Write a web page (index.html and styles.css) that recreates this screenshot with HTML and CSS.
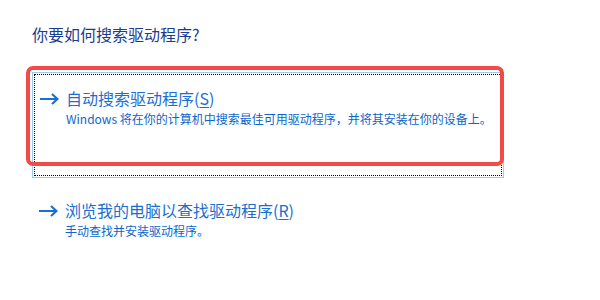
FILE: index.html
```html
<!DOCTYPE html>
<html lang="zh-CN">
<head>
    <meta charset="UTF-8">
    <title>更新驱动程序</title>
    <link rel="stylesheet" href="styles.css">
</head>
<body>

    <!-- Frage oben -->
    <h1 class="question">你要如何搜索驱动程序?</h1>

    <!-- Auswahl: automatisch -->
    <div class="option option-selected">
        <div class="focus">
            <svg class="arrow" width="20" height="12" viewBox="0 0 20 12">
                <path d="M1 6 H18 M13 1 L18.5 6 L13 11" fill="none" stroke="#1a6fd2" stroke-width="2.2"/>
            </svg>
            <div class="option-text">
                <div class="option-title">自动搜索驱动程序(<u>S</u>)</div>
                <div class="option-desc">Windows 将在你的计算机中搜索最佳可用驱动程序，并将其安装在你的设备上。</div>
            </div>
        </div>
        <!-- rote Markierung -->
        <div class="mark"></div>
    </div>

    <!-- Auswahl: manuell -->
    <div class="option">
        <div class="focus">
            <svg class="arrow" width="20" height="12" viewBox="0 0 20 12">
                <path d="M1 6 H18 M13 1 L18.5 6 L13 11" fill="none" stroke="#1a6fd2" stroke-width="2.2"/>
            </svg>
            <div class="option-text">
                <div class="option-title">浏览我的电脑以查找驱动程序(<u>R</u>)</div>
                <div class="option-desc">手动查找并安装驱动程序。</div>
            </div>
        </div>
    </div>

</body>
</html>
```

FILE: styles.css
```css
body {
    margin: 0;
    padding: 23px 0 0 32px;
    background-color: white;
    font-family: "Noto Sans CJK SC", "Noto Sans", sans-serif;
}

/* Frage */
.question {
    margin: 0 0 27px 0;
    font-size: 16px;
    font-weight: normal;
    line-height: 22px;
    color: #1b3c8f;
}

/* Optionen */
.option {
    position: relative;
    width: 472px;
    height: 106px;
    box-sizing: border-box;
    border: 1px solid transparent;
    margin-bottom: 7px;
}

.option-selected {
    border-color: #9ccaf0;
}

.focus {
    display: flex;
    align-items: flex-start;
    height: 100%;
    box-sizing: border-box;
    padding: 13px 0 0 5px;
}

.option-selected .focus {
    margin: 1px;
    height: calc(100% - 2px);
    padding: 12px 0 0 4px;
    border: 1px dotted #000;
}

.arrow {
    margin-top: 6px;
    margin-right: 7px;
    flex-shrink: 0;
}

.option-title {
    font-size: 16px;
    line-height: 23px;
    color: #1a6fd2;
}

.option-title u {
    text-underline-offset: 2px;
}

.option-desc {
    font-size: 12px;
    line-height: 18px;
    color: #0b66cc;
}

/* rote Markierung */
.mark {
    position: absolute;
    left: -7px;
    top: -7px;
    width: 478px;
    height: 100px;
    box-sizing: border-box;
    border: 4px solid #f24a48;
    border-radius: 7px;
}
```
